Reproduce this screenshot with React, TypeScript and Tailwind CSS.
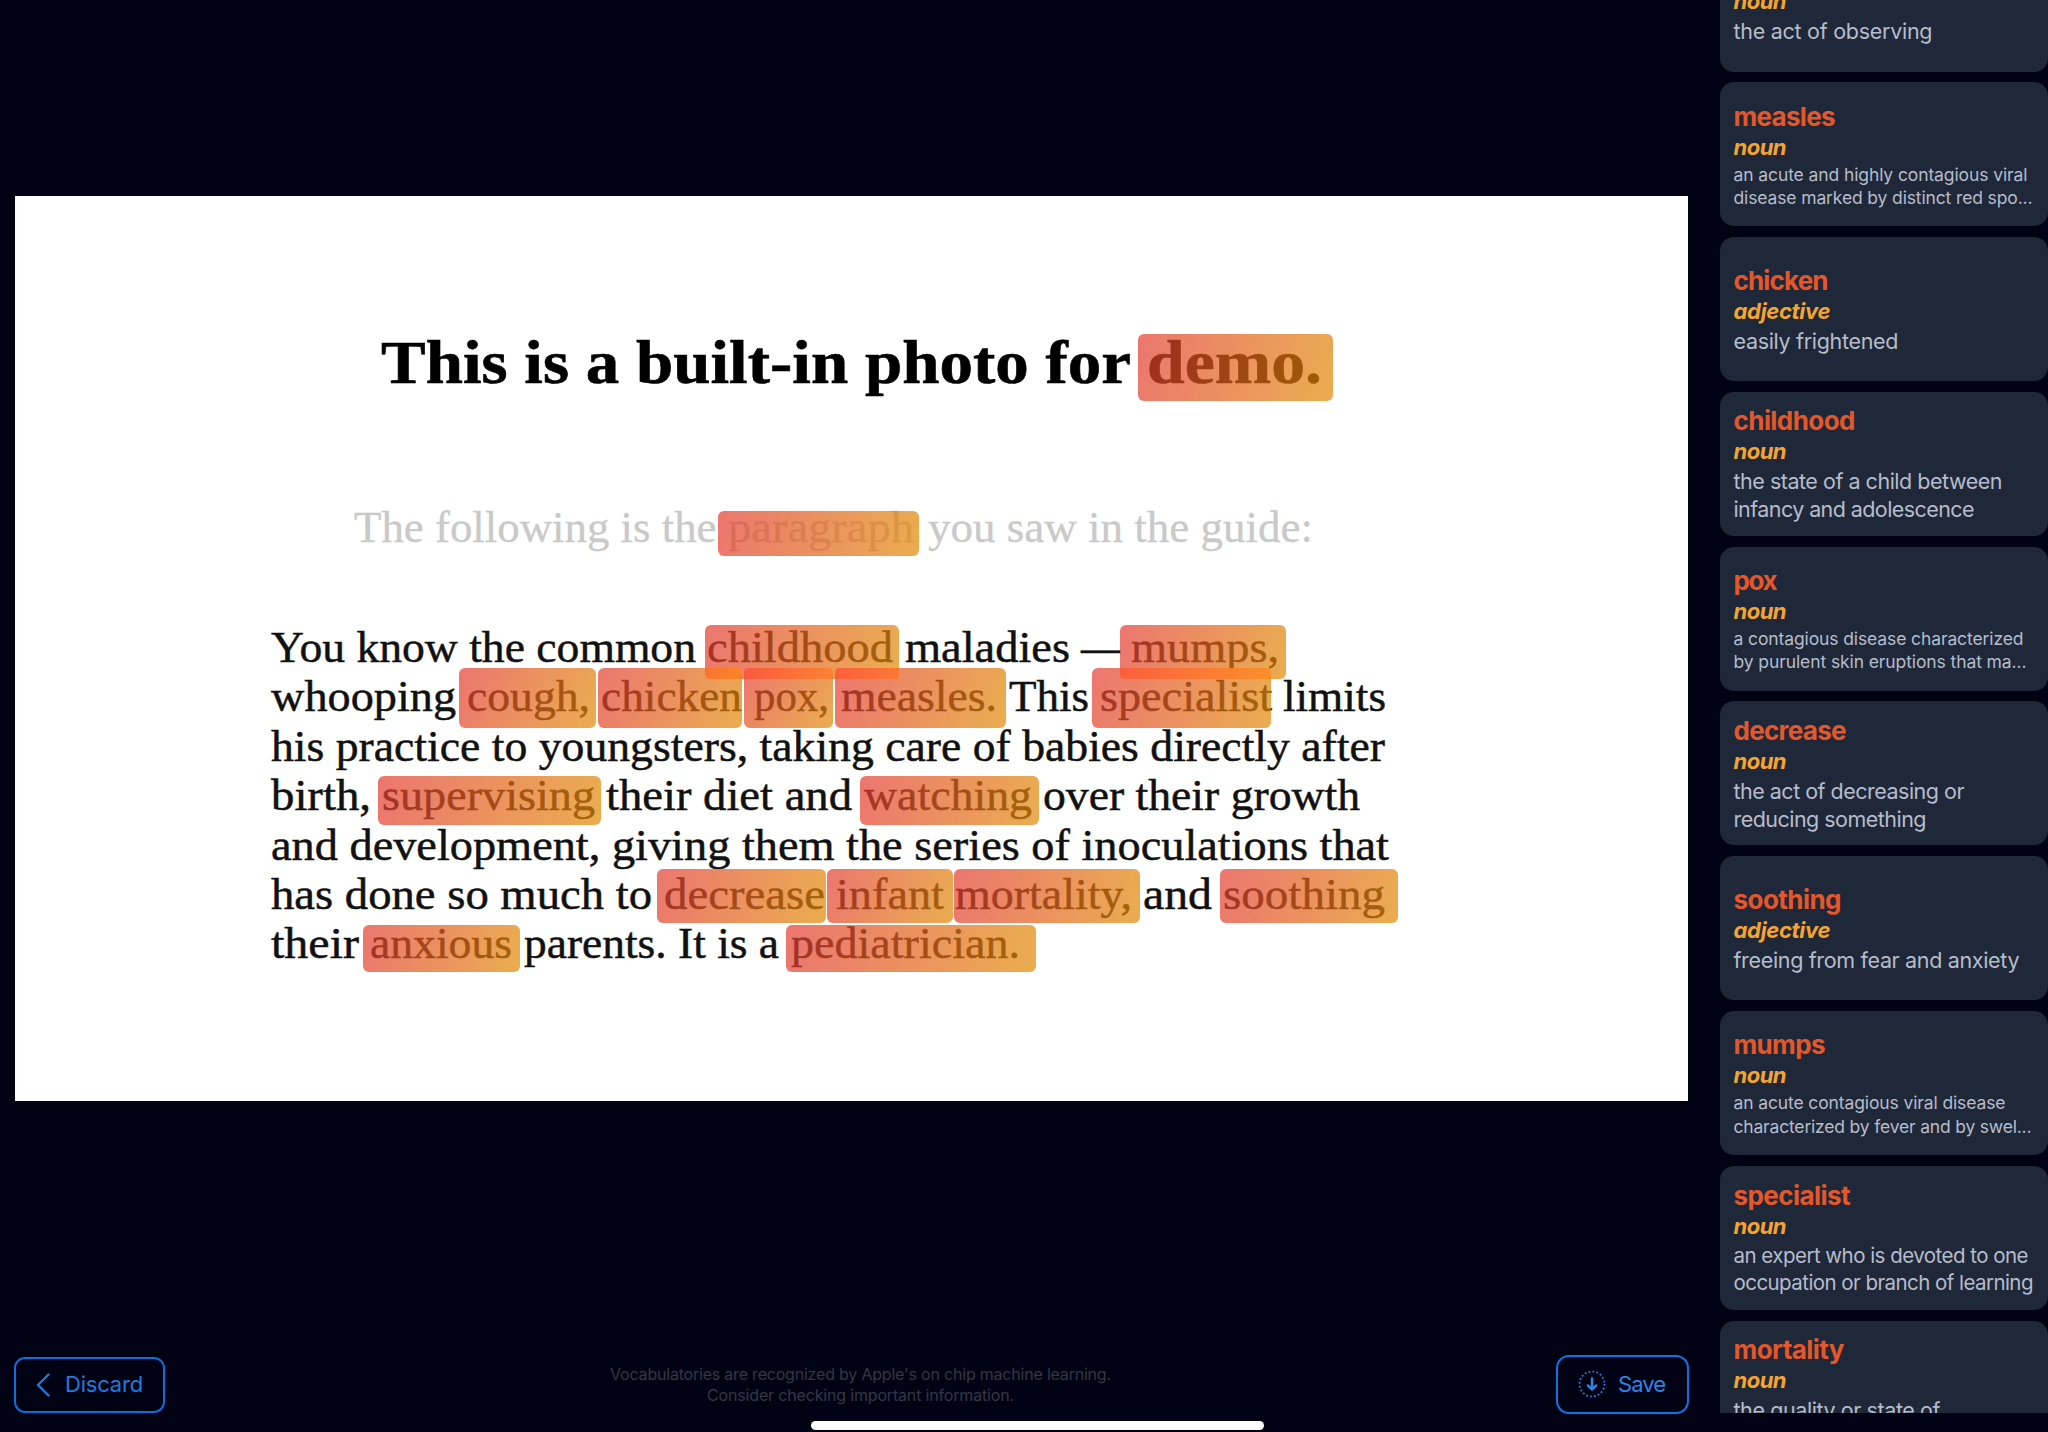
import { useLayoutEffect, useRef } from 'react';

type FitProps = { text: string; width: number; className?: string; mode?: 'scale' | 'space' };

/* Sets a run of text to an exact width, by glyph scaling or by tracking. */
function Fit({ text, width, className = '', mode = 'space' }: FitProps) {
  const ref = useRef<HTMLSpanElement>(null);
  useLayoutEffect(() => {
    const el = ref.current;
    if (!el) return;
    el.style.letterSpacing = '0px';
    el.style.transform = 'none';
    const natural = el.getBoundingClientRect().width;
    if (mode === 'scale') {
      el.style.transform = `scaleX(${width / natural})`;
    } else {
      el.style.letterSpacing = `${(width - natural) / (text.length - 1)}px`;
    }
  }, [text, width, mode]);
  return (
    <span className={`block shrink-0 whitespace-pre ${className}`} style={{ width }}>
      <span ref={ref} className="inline-block origin-left">
        {text}
      </span>
    </span>
  );
}

type Segment = [start: number, end: number, text: string];

const TITLE: Segment[] = [
  [381, 1131, 'This is a built-in photo for'],
  [1147, 1322, 'demo.'],
];
const SUBTITLE: Segment[] = [
  [353.5, 716, 'The following is the'],
  [728, 914, 'paragraph'],
  [928, 1313, 'you saw in the guide:'],
];
const BODY: Segment[][] = [
  [
    [271, 696, 'You know the common'],
    [707, 893, 'childhood'],
    [905, 1070, 'maladies'],
    [1081, 1120, '—'],
    [1131, 1279, 'mumps,'],
  ],
  [
    [271, 456, 'whooping'],
    [467, 590, 'cough,'],
    [601, 742, 'chicken'],
    [754, 829, 'pox,'],
    [841, 997, 'measles.'],
    [1009, 1089, 'This'],
    [1100, 1272, 'specialist'],
    [1283, 1386, 'limits'],
  ],
  [[271, 1385, 'his practice to youngsters, taking care of babies directly after']],
  [
    [271, 371, 'birth,'],
    [382, 595, 'supervising'],
    [606, 852, 'their diet and'],
    [864, 1032, 'watching'],
    [1043, 1360, 'over their growth'],
  ],
  [[271, 1389, 'and development, giving them the series of inoculations that']],
  [
    [271, 652, 'has done so much to'],
    [664, 825, 'decrease'],
    [836, 944, 'infant'],
    [955, 1132, 'mortality,'],
    [1143, 1212, 'and'],
    [1223, 1385, 'soothing'],
  ],
  [
    [271, 359, 'their'],
    [370, 512, 'anxious'],
    [524, 779, 'parents. It is a'],
    [791, 1020, 'pediatrician.'],
  ],
];

type Box = [left: number, top: number, right: number, bottom: number];

/* bounds of each recognised word on the photo */
const MARKS: Box[] = [
  [1137.5, 333.5, 1333, 400.5],
  [718, 510.5, 918.5, 556],
  [704.5, 625, 899, 679],
  [1120, 625, 1286, 679],
  [458.5, 667.5, 596, 728],
  [597.5, 667.5, 742, 728],
  [744, 667.5, 832.5, 728],
  [834.5, 667.5, 1006, 728],
  [1091.5, 667.5, 1271, 728],
  [377.5, 776, 601, 825],
  [859.5, 776, 1039, 825],
  [657, 869, 826, 923],
  [827, 869, 953, 923],
  [954, 869, 1140, 923],
  [1219.5, 869, 1397.5, 923],
  [363, 925, 519.5, 972],
  [785.5, 925, 1035.5, 972],
];

/* where two marks meet the colours burn brighter */
const OVERLAPS: { box: Box; tone: string }[] = [
  { box: [704.5, 667.5, 742, 679], tone: 'from-[#ff7433] to-[#ff8424]' },
  { box: [744, 667.5, 832.5, 679], tone: 'from-[#ff5a3e] to-[#ff8236]' },
  { box: [834.5, 667.5, 899, 679], tone: 'from-[#ff5f3c] to-[#ff7a34]' },
  { box: [1120, 667.5, 1271, 679], tone: 'from-[#ff603e] to-[#ff8f2b]' },
];

const PHOTO_X = 15;
const PHOTO_Y = 196;

const place = ([l, t, r, b]: Box) => ({ left: l - PHOTO_X, top: t - PHOTO_Y, width: r - l, height: b - t });

/* gradient running along the box's own diagonal */
const diagonal = ([l, t, r, b]: Box) => {
  const angle = 90 + (Math.atan2(b - t, r - l) * 180) / Math.PI;
  return `linear-gradient(${angle}deg, rgb(227 60 50 / 0.7), rgb(226 138 4 / 0.7))`;
};

function Line({ segments, className }: { segments: Segment[]; className: string }) {
  return (
    <div className={`flex ${className}`}>
      {segments.map(([start, end, text], i) => (
        <div key={i} style={{ marginLeft: start - (i ? segments[i - 1][1] : PHOTO_X) }}>
          <Fit text={text} width={end - start} mode="scale" />
        </div>
      ))}
    </div>
  );
}

type Entry = { word: string; w: number; kind: string; lines: [string, number][]; size: 'lg' | 'md' | 'sm' };

const ENTRIES: Entry[] = [
  { word: 'watching', w: 109, kind: 'noun', size: 'lg', lines: [['the act of observing', 199]] },
  {
    word: 'measles', w: 102, kind: 'noun', size: 'sm',
    lines: [['an acute and highly contagious viral', 294], ['disease marked by distinct red spo...', 299]],
  },
  { word: 'chicken', w: 95, kind: 'adjective', size: 'lg', lines: [['easily frightened', 165]] },
  {
    word: 'childhood', w: 122, kind: 'noun', size: 'lg',
    lines: [['the state of a child between', 269], ['infancy and adolescence', 241]],
  },
  {
    word: 'pox', w: 44, kind: 'noun', size: 'sm',
    lines: [['a contagious disease characterized', 290], ['by purulent skin eruptions that ma...', 293]],
  },
  {
    word: 'decrease', w: 113, kind: 'noun', size: 'lg',
    lines: [['the act of decreasing or', 231], ['reducing something', 193]],
  },
  { word: 'soothing', w: 108, kind: 'adjective', size: 'lg', lines: [['freeing from fear and anxiety', 286]] },
  {
    word: 'mumps', w: 92, kind: 'noun', size: 'sm',
    lines: [['an acute contagious viral disease', 272], ['characterized by fever and by swel...', 298]],
  },
  {
    word: 'specialist', w: 117, kind: 'noun', size: 'md',
    lines: [['an expert who is devoted to one', 295], ['occupation or branch of learning', 300]],
  },
  {
    word: 'mortality', w: 111, kind: 'noun', size: 'lg',
    lines: [['the quality or state of', 207], ['being mortal', 118]],
  },
];

const DEF_SIZE = {
  lg: 'text-[21.5px] leading-[28px]',
  md: 'text-[20.5px] leading-[27px]',
  sm: 'text-[17.5px] leading-[23.3px]',
};

function Card({ entry }: { entry: Entry }) {
  return (
    <article className="flex h-[144px] shrink-0 flex-col justify-center rounded-[14px] bg-[#1f2838] pt-px pl-[13.5px]">
      <h2 className="text-[26px] leading-[31px] font-bold text-[#e4572a]">
        <Fit text={entry.word} width={entry.w} />
      </h2>
      <p className="text-[22px] leading-[31px] font-bold text-[#f5a52e] italic">
        <Fit text={entry.kind} width={entry.kind === 'noun' ? 53 : 97} />
      </p>
      <div className={`text-[#b6bccb] ${DEF_SIZE[entry.size]}`}>
        {entry.lines.map(([text, width]) => (
          <Fit key={text} text={text} width={width} />
        ))}
      </div>
    </article>
  );
}

export default function App() {
  return (
    <div className="flex h-[1432px] w-[2048px] overflow-hidden bg-[#010314] font-['Inter',sans-serif]">
      <main className="relative flex w-[1720px] flex-col">
        <section className="relative mt-[196px] ml-[15px] h-[905px] w-[1673px] bg-white font-['Liberation_Serif',serif] text-black">
          <Line
            segments={TITLE}
            className="pt-[129px] text-[61px] leading-[76px] font-bold [-webkit-text-stroke:0.6px_currentColor]"
          />
          <Line
            segments={SUBTITLE}
            className="pt-[102px] text-[44.5px] leading-[49.5px] text-[#c9c9c9] [-webkit-text-stroke:0.3px_currentColor]"
          />
          <div className="pt-[70.5px]">
            {BODY.map((segments, i) => (
              <Line
                key={i}
                segments={segments}
                className="h-[49.4px] text-[44.5px] leading-[49.4px] text-[#111] [-webkit-text-stroke:0.5px_currentColor]"
              />
            ))}
          </div>
          {MARKS.map((box, i) => (
            <span key={i} className="absolute rounded-md" style={{ ...place(box), backgroundImage: diagonal(box) }} />
          ))}
          {OVERLAPS.map(({ box, tone }, i) => (
            <span key={i} className={`absolute rounded-sm bg-linear-to-r opacity-85 ${tone}`} style={place(box)} />
          ))}
        </section>

        <footer className="mt-[253.5px] ml-[14px] flex h-[60px] w-[1675px] items-start justify-between">
          <button className="mt-[2px] flex h-[56px] w-[151px] items-center rounded-[11px] border-[2.5px] border-[#0d6fdc] pl-[20px] text-[22px] text-[#2179dc]">
            <svg width="14" height="26" viewBox="0 0 14 26" fill="none" stroke="currentColor" strokeWidth="2.3" strokeLinecap="round" strokeLinejoin="round">
              <path d="M12.5 2.5 2 13l10.5 10.5" />
            </svg>
            <span className="ml-[15px]">
              <Fit text="Discard" width={78} />
            </span>
          </button>
          <p className="mt-[9px] text-center text-[16px] leading-[21.3px] text-[#353645]">
            <Fit text="Vocabulatories are recognized by Apple's on chip machine learning." width={501} />
            <Fit text="Consider checking important information." width={307} className="mx-auto" />
          </p>
          <button className="flex h-[59px] w-[133px] items-center rounded-[13px] border-[2.5px] border-[#0d74e8] pl-[20px] text-[22px] text-[#2e84e6]">
            <svg width="28" height="28" viewBox="0 0 28 28" fill="none" stroke="currentColor" strokeLinecap="round" strokeLinejoin="round">
              <circle cx="14" cy="14" r="12.5" strokeWidth="1.7" strokeDasharray="1.8 2.13" strokeLinecap="butt" />
              <path d="M14 8.5v11M9.8 15.4 14 19.600l4.200-4.200" strokeWidth="2.4" />
            </svg>
            <span className="ml-[11.5px]">
              <Fit text="Save" width={48} />
            </span>
          </button>
        </footer>
        <div className="absolute top-[1421px] left-[811px] h-[9px] w-[453px] rounded-full bg-white" />
      </main>

      <aside className="h-[1413px] w-[328px] overflow-hidden">
        <div className="-mt-[72.5px] flex flex-col gap-[10.8px]">
          {ENTRIES.map((entry) => (
            <Card key={entry.word} entry={entry} />
          ))}
        </div>
      </aside>
    </div>
  );
}
